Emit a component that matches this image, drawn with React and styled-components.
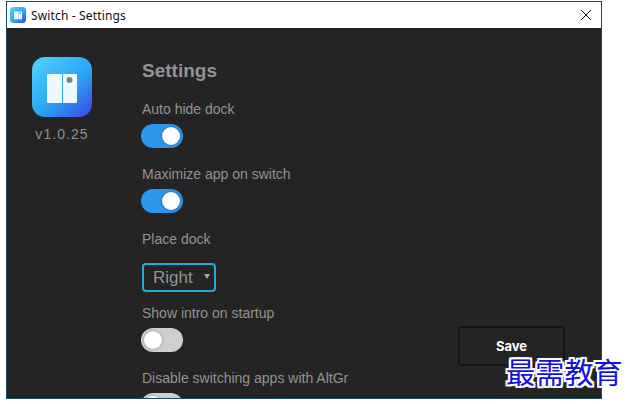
import React from 'react';
import styled, { createGlobalStyle } from 'styled-components';

const GlobalStyle = createGlobalStyle`
  html, body {
    margin: 0;
    padding: 0;
    background: #fff;
  }
  body {
    font-family: "Liberation Sans", Arial, sans-serif;
  }
`;

const Page = styled.div`
  width: 630px;
  height: 404px;
  padding: 1px 0 0 6px;
  box-sizing: border-box;
  overflow: hidden;
  position: relative;
`;

const Window = styled.div`
  width: 596px;
  height: 398px;
  box-sizing: border-box;
  border: 1px solid #1c4a60;
  display: flex;
  flex-direction: column;
  background: #242424;
  overflow: hidden;
  position: relative;
`;

const TitleBar = styled.div`
  height: 26px;
  flex: none;
  background: #fff;
  display: flex;
  align-items: center;
  padding: 0 9px 0 3px;
  gap: 5px;
`;

const TitleText = styled.span`
  font-family: "Noto Sans", sans-serif;
  font-size: 12px;
  color: #111;
  flex: 1;
  letter-spacing: 0.15px;
`;

const Body = styled.div`
  flex: 1;
  display: flex;
  min-height: 0;
`;

const Sidebar = styled.div`
  width: 110px;
  flex: none;
  display: flex;
  flex-direction: column;
  align-items: center;
  padding-top: 29px;
`;

const Version = styled.div`
  margin-top: 9px;
  font-size: 14px;
  line-height: 16px;
  letter-spacing: 1.05px;
  color: #919191;
`;

const Main = styled.div`
  flex: 1;
  padding: 32px 0 0 25px;
  display: flex;
  flex-direction: column;
  align-items: flex-start;
`;

const Heading = styled.h1`
  margin: 0 0 19px;
  font-size: 19px;
  line-height: 22px;
  font-weight: bold;
  color: #929292;
`;

const Label = styled.div`
  font-size: 14px;
  line-height: 16px;
  color: #939393;
`;

const Field = styled.div`
  display: flex;
  flex-direction: column;
  align-items: flex-start;
  gap: 7px;
  margin-bottom: 18px;
`;

const DockField = styled(Field)`
  gap: 16px;
  margin-bottom: 13px;
`;

const Track = styled.div`
  width: 42px;
  height: 24px;
  margin-left: -1px;
  border-radius: 12px;
  padding: 3px;
  box-sizing: border-box;
  display: flex;
  justify-content: ${(p) => (p.$on ? 'flex-end' : 'flex-start')};
  background: ${(p) => (p.$on ? '#2b96ec' : '#cfcfcf')};
`;

const Knob = styled.div`
  width: 18px;
  height: 18px;
  border-radius: 50%;
  background: #fff;
  box-shadow: 0 0 3px rgba(0, 0, 50, 0.4);
`;

const Select = styled.div`
  width: 74px;
  height: 29px;
  box-sizing: border-box;
  border: 2px solid #2aa8dc;
  border-radius: 4px;
  display: flex;
  align-items: center;
  padding-left: 9px;
  gap: 11px;
  font-size: 17px;
  color: #939393;
`;

const Caret = styled.span`
  width: 0;
  height: 0;
  border-left: 3px solid transparent;
  border-right: 3px solid transparent;
  border-top: 5px solid #a8a8a8;
  margin-bottom: 3px;
`;

const SaveButton = styled.button`
  position: absolute;
  left: 451px;
  top: 324px;
  width: 107px;
  height: 40px;
  box-sizing: border-box;
  border: 2px solid #151515;
  border-radius: 4px;
  background: #242424;
  color: #fff;
  font-family: Inter, "Liberation Sans", sans-serif;
  font-size: 13px;
  font-weight: 700;
  padding: 0;
`;

const Watermark = styled.div`
  position: absolute;
  left: 506px;
  top: 359px;
  font-family: "Noto Sans CJK SC", sans-serif;
  font-size: 29px;
  line-height: 24px;
  font-weight: 400;
  letter-spacing: 0.2px;
  color: #1010e0;
  white-space: nowrap;
  text-shadow:
    2px 0 0 #fff, -2px 0 0 #fff, 0 2px 0 #fff, 0 -2px 0 #fff,
    2px 2px 0 #fff, -2px -2px 0 #fff, 2px -2px 0 #fff, -2px 2px 0 #fff;
`;

const AppIcon = ({ size }) => (
  <svg width={size} height={size} viewBox="0 0 60 60">
    <defs>
      <linearGradient id={`grad${size}`} x1="0.1" y1="0.05" x2="0.95" y2="1">
        <stop offset="0" stopColor="#4dcdfc" />
        <stop offset="0.55" stopColor="#2ba3f3" />
        <stop offset="1" stopColor="#3c48e6" />
      </linearGradient>
    </defs>
    <rect width="60" height="60" rx="13" fill={`url(#grad${size})`} />
    <path d="M16 17h14v29H16a1 1 0 0 1-1-1V18a1 1 0 0 1 1-1z" fill="#eef9fe" />
    <path d="M31 17h13a1 1 0 0 1 1 1v27a1 1 0 0 1-1 1H31z" fill="#eef9fe" />
    <circle cx="37.5" cy="23" r="3" fill="#6f8792" />
  </svg>
);

const CloseIcon = () => (
  <svg width="12" height="12" viewBox="0 0 12 12">
    <path d="M1 1l10 10M11 1L1 11" stroke="#111" strokeWidth="1" fill="none" />
  </svg>
);

const Toggle = ({ on }) => (
  <Track $on={on}>
    <Knob />
  </Track>
);

const App = () => (
  <Page>
    <GlobalStyle />
    <Window>
      <TitleBar>
        <AppIcon size={16} />
        <TitleText>Switch - Settings</TitleText>
        <CloseIcon />
      </TitleBar>
      <Body>
        <Sidebar>
          <AppIcon size={60} />
          <Version>v1.0.25</Version>
        </Sidebar>
        <Main>
          <Heading>Settings</Heading>
          <Field>
            <Label>Auto hide dock</Label>
            <Toggle on />
          </Field>
          <Field>
            <Label>Maximize app on switch</Label>
            <Toggle on />
          </Field>
          <DockField>
            <Label>Place dock</Label>
            <Select>
              Right
              <Caret />
            </Select>
          </DockField>
          <Field>
            <Label>Show intro on startup</Label>
            <Toggle />
          </Field>
          <Field>
            <Label>Disable switching apps with AltGr</Label>
            <Toggle />
          </Field>
        </Main>
      </Body>
      <SaveButton>Save</SaveButton>
    </Window>
    <Watermark>最需教育</Watermark>
  </Page>
);

export default App;
